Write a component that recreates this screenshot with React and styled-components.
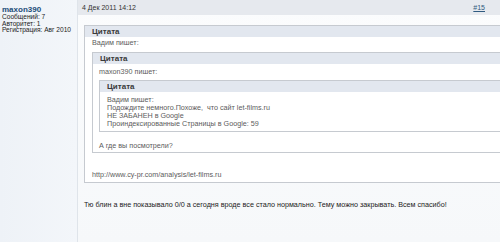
import React from 'react';
import styled, { createGlobalStyle } from 'styled-components';

const GlobalStyle = createGlobalStyle`
	html, body {
		margin: 0;
		padding: 0;
		background: #f9fafc;
		overflow: hidden;
	}
	body {
		font-family: "Liberation Sans", Arial, sans-serif;
		-webkit-font-smoothing: antialiased;
	}
`;

const Post = styled.div`
	display: flex;
	width: 500px;
	height: 242px;
	overflow: hidden;
`;

const Sidebar = styled.aside`
	flex: 0 0 78px;
	background: linear-gradient(to right, #eef2f7, #f3f6fa);
	border-right: 1px solid #dfe4ea;
	padding: 5px 0 0 2px;
	box-sizing: border-box;
`;

const UserName = styled.div`
	font-size: 8px;
	font-weight: bold;
	color: #1d4d78;
	line-height: 9px;
`;

const UserInfo = styled.div`
	font-size: 6.6px;
	line-height: 6.5px;
	color: #222;
`;

const Main = styled.div`
	flex: 1;
	min-width: 0;
	background: linear-gradient(#fbfcfd, #f6f8fa);
`;

const PostHeader = styled.div`
	height: 15px;
	background: #e6e9ee;
	display: flex;
	align-items: center;
	justify-content: space-between;
	padding: 0 15px 0 4px;
	font-size: 7px;
	color: #333;
`;

const PostNumber = styled.a`
	color: #2f5a80;
	text-decoration: underline;
	font-size: 7px;
`;

const Content = styled.div`
	padding: 10px 0 0 6px;
	font-size: 7.2px;
	line-height: 8px;
	color: #222;
`;

const Quote = styled.div`
	border: 1px solid #c6cad0;
	background: #fff;
	margin-right: ${props => props.$overflow}px;
	margin-top: ${props => props.$top || 0}px;
`;

const QuoteTitle = styled.div`
	height: 11px;
	background: #e2e7ef;
	padding-left: 7px;
	font-size: 8px;
	font-weight: bold;
	line-height: 11px;
	color: #3a3a3a;
`;

const QuoteBody = styled.div`
	padding: ${props => props.$pad};
	color: #5c5c5c;
`;

const Line = styled.div`
	margin-top: ${props => props.$top || 0}px;
`;

const Reply = styled.div`
	margin-top: 18px;
	color: #222;
`;

export default function App() {
	return (
		<Post>
			<GlobalStyle />
			<Sidebar>
				<UserName>maxon390</UserName>
				<UserInfo>Сообщений: 7</UserInfo>
				<UserInfo>Авторитет: 1</UserInfo>
				<UserInfo>Регистрация: Авг 2010</UserInfo>
			</Sidebar>
			<Main>
				<PostHeader>
					<span>4 Дек 2011 14:12</span>
					<PostNumber>#15</PostNumber>
				</PostHeader>
				<Content>
					<Quote $overflow={-40}>
						<QuoteTitle>Цитата</QuoteTitle>
						<QuoteBody $pad="2px 0 3px 7px">
							<Line>Вадим пишет:</Line>
							<Quote $overflow={-20} $top={5}>
								<QuoteTitle>Цитата</QuoteTitle>
								<QuoteBody $pad="4px 0 2px 6px">
									<Line>maxon390 пишет:</Line>
									<Quote $overflow={-20} $top={4}>
										<QuoteTitle>Цитата</QuoteTitle>
										<QuoteBody $pad="4px 0 3px 7px">
											<Line>Вадим пишет:</Line>
											<Line>Подождите немного.Похоже,&nbsp; что сайт let-films.ru</Line>
											<Line>НЕ ЗАБАНЕН в Google</Line>
											<Line>Проиндексированные Страницы в Google: 59</Line>
										</QuoteBody>
									</Quote>
									<Line $top={10}>А где вы посмотрели?</Line>
								</QuoteBody>
							</Quote>
							<Line $top={18}>http://www.cy-pr.com/analysis/let-films.ru</Line>
						</QuoteBody>
					</Quote>
					<Reply>Тю блин а вне показывало 0/0 а сегодня вроде все стало нормально. Тему можно закрывать. Всем спасибо!</Reply>
				</Content>
			</Main>
		</Post>
	);
}
